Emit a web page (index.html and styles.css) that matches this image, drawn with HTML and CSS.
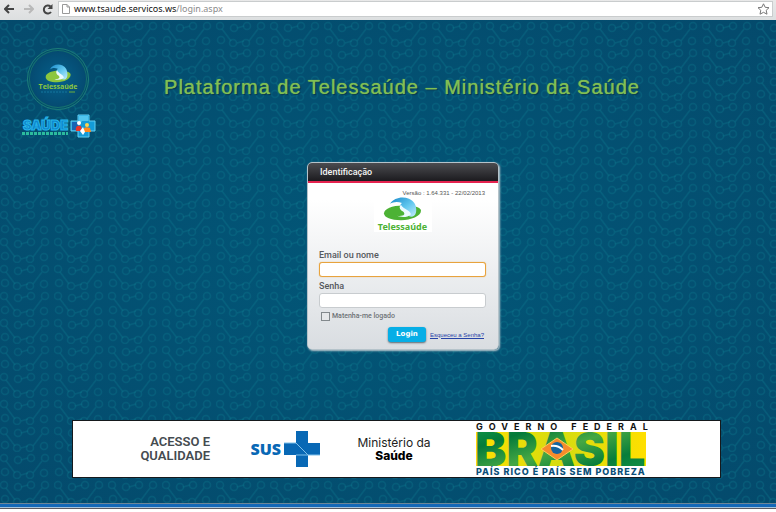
FILE: index.html
```html
<!DOCTYPE html>
<html lang="pt-BR">
<head>
<meta charset="utf-8">
<title>Plataforma de Telessaúde</title>
<link rel="stylesheet" href="styles.css">
</head>
<body>
<svg class="defs" width="0" height="0" aria-hidden="true">
  <defs>
    <linearGradient id="wave" x1="0" y1="0" x2="1" y2="1">
      <stop offset="0" stop-color="#1687c9"/><stop offset=".55" stop-color="#62c8ef"/><stop offset="1" stop-color="#c4ecfa"/>
    </linearGradient>
    <symbol id="leafwave" viewBox="0 0 40 28">
      <path d="M1 19C1 14 9 10 20 10C31 10 38 12 38 16C38 22 28 27 18 27C8 27 1 24 1 19Z" fill="currentColor"/>
      <path d="M7 8C11 1 19-1 26 2C32 5 34 11 33 18C32 23 28 24 25 22C28 20 25 16 21 15C16 13 16 10 19 7C14 5 10 6 7 8Z" fill="url(#wave)"/>
      <path d="M18 9C20 14 27 15 28 20C25 24 18 24 14 22C21 23 23 20 20 17C16 14 16 11 18 9Z" fill="#eafaff"/>
    </symbol>
  </defs>
</svg>
<header class="browser">
  <button class="nav" aria-label="Voltar"><svg width="11" height="10" viewBox="0 0 11 10"><path d="M10 5H2M5 1L1 5L5 9" fill="none" stroke="#444" stroke-width="2"/></svg></button>
  <button class="nav" aria-label="Avançar"><svg width="11" height="10" viewBox="0 0 11 10"><path d="M1 5H9M6 1L10 5L6 9" fill="none" stroke="#b9b9b9" stroke-width="2"/></svg></button>
  <button class="nav" aria-label="Recarregar"><svg width="11" height="11" viewBox="0 0 11 11"><path d="M9 8A4 4 0 1 1 8.500 2.500" fill="none" stroke="#444" stroke-width="2"/><path d="M10.500 0V5H5.500Z" fill="#444"/></svg></button>
  <div class="address">
    <svg width="8" height="10" viewBox="0 0 8 10"><path d="M.5.5H5L7.500 3V9.500H.5ZM5 .5V3H7.500" fill="#fff" stroke="#999"/></svg>
    <span class="url">www.tsaude.servicos.ws<span class="path">/login.aspx</span></span>
    <svg width="13" height="12" viewBox="0 0 13 12"><path d="M6.500.8L8.200 4.300L12 4.700L9.200 7.300L10 11.200L6.500 9.300L3 11.200L3.800 7.300L1 4.700L4.800 4.300Z" fill="#fff" stroke="#777"/></svg>
  </div>
</header>
<div class="page">
  <div class="masthead">
    <div class="logos">
      <div class="seal">
        <svg width="27" height="19" aria-hidden="true"><use href="#leafwave"/></svg>
        <span class="seal-name">Telessaúde</span>
        <svg width="34" height="2" aria-hidden="true"><path d="M0 1H26" stroke="#14779e" stroke-dasharray="2 1"/><path d="M28 1H34" stroke="#6fae3c"/></svg>
      </div>
      <svg class="saude" width="74" height="24" viewBox="0 0 74 24" role="img" aria-label="Saúde mais perto de você">
        <text x="1" y="16" class="saude-word">SAÚDE</text>
        <path d="M0 19.500H46" stroke="#2cbb9d" stroke-width="3" stroke-dasharray="3 1"/>
        <path d="M56 1H67V7H73V17H67V23H56V17H49V7H56Z" fill="#139bd8" stroke="#62cdf0"/>
        <path d="M57 2H66V7H60L57 11Z" fill="#53c5ee"/>
        <path d="M50 8H56V16H50Z" fill="#1764b4"/>
        <circle cx="57" cy="9" r="2" fill="#fff"/><path d="M54 17C53 13 55 11 59 12L60 17Z" fill="#e6352c"/>
        <circle cx="65" cy="11" r="2" fill="#ffd34d"/><path d="M61 18C61 14 63 12 68 14L69 18Z" fill="#ff8a1e"/>
        <path d="M58 17L61 13L63 18L61 21Z" fill="#fff"/>
      </svg>
    </div>
    <h1 class="title">Plataforma de Telessaúde – Ministério da Saúde</h1>
  </div>

  <form class="card">
    <h2 class="card-title">Identificação</h2>
    <div class="card-body">
      <p class="version">Versão : 1.64.331 - 22/02/2013</p>
      <div class="brand">
        <svg width="40" height="24" viewBox="0 0 40 28" preserveAspectRatio="none" aria-hidden="true"><use href="#leafwave"/></svg>
        <span>Telessaúde</span>
      </div>
      <label class="label" for="user">Email ou nome</label>
      <input class="field focused" id="user" type="text">
      <label class="label" for="pass">Senha</label>
      <input class="field" id="pass" type="password">
      <div class="remember"><input type="checkbox" id="keep"><label for="keep">Matenha-me logado</label></div>
      <div class="actions"><button class="login" type="button">Login</button><a href="#">Esqueceu a Senha?</a></div>
    </div>
  </form>

  <footer class="sponsors">
    <div class="access">ACESSO E<br>QUALIDADE</div>
    <div class="sus">
      <span>SUS</span>
      <svg width="36" height="36" viewBox="0 0 36 36" aria-hidden="true"><path d="M12 0H24V12H36V24H24V36H12V24H0V12H12Z" fill="#0868b5"/><path d="M0 12H12L24 24H36M12 24H24" fill="none" stroke="#7fc0ea"/></svg>
    </div>
    <div class="ministry">Ministério da<br><b>Saúde</b></div>
    <div class="federal">
      <span class="gov">GOVERNO FEDERAL</span>
      <svg class="flag" width="170" height="34" viewBox="0 0 170 34" role="img" aria-label="Brasil">
        <defs>
          <linearGradient id="yellow"><stop offset="0" stop-color="#ffdf00"/><stop offset=".5" stop-color="#d5dc10"/><stop offset="1" stop-color="#ffdf00"/></linearGradient>
          <linearGradient id="green" x1="0" y1="0" x2="1" y2="1"><stop offset="0" stop-color="#13a04b"/><stop offset=".25" stop-color="#047a3a"/><stop offset=".5" stop-color="#45a744"/><stop offset=".75" stop-color="#077d3b"/><stop offset="1" stop-color="#16994a"/></linearGradient>
        </defs>
        <rect width="170" height="34" fill="url(#yellow)"/>
        <text x="-1" y="34" class="brasil">BRASIL</text>
        <path d="M65 17L81 6L97 17L81 28Z" fill="#f68b2c" stroke="#ffd052"/>
        <circle cx="81" cy="16" r="6" fill="#14649f"/><path d="M75 14Q82 13 87 18" fill="none" stroke="#fff" stroke-width="2"/>
      </svg>
      <span class="motto">PAÍS RICO É PAÍS SEM POBREZA</span>
    </div>
  </footer>
</div>
<div class="taskbar"></div>
</body>
</html>
```
FILE: styles.css
```css
* { box-sizing: border-box; }
body {
  margin: 0;
  min-height: 100vh;
  display: flex;
  flex-direction: column;
  background: #fff;
  font-family: "Noto Sans", sans-serif;
}
.defs { position: absolute; }
h1, h2, p { margin: 0; font-weight: 400; }
svg { display: block; flex: none; }

.browser {
  display: flex;
  align-items: center;
  gap: 8px;
  height: 20px;
  padding: 0 3px 2px 4px;
  background: linear-gradient(#e9e9e9, #dcdfe0);
}
.nav { padding: 0; border: 0; background: none; }
.nav + .address { margin-left: -3px; }
.address {
  flex: 1;
  display: flex;
  align-items: center;
  gap: 4px;
  height: 16px;
  padding: 0 2px 0 3px;
  background: #fff;
  border: 1px solid #c9cccd;
}
.url { flex: 1; font: 9px/14px "Noto Sans", sans-serif; color: #111; }
.path { color: #8b8b8b; }

.page {
  flex: 1;
  background:
    url("data:image/svg+xml,%3Csvg xmlns='http://www.w3.org/2000/svg' width='54' height='27'%3E%3Cg fill='none' stroke='%230d7d92' stroke-opacity='.3' stroke-width='1.5'%3E%3Cpath d='M6 9L15 21M33 21L42 9M21 8L28 6M21 23L28 21'/%3E%3Ccircle cx='4' cy='6' r='3.5'/%3E%3Ccircle cx='17' cy='23' r='3.5'/%3E%3Ccircle cx='30' cy='23' r='3.5'/%3E%3Ccircle cx='45' cy='6' r='3.5'/%3E%3Ccircle cx='31' cy='6' r='3.5'/%3E%3Ccircle cx='18' cy='8' r='3.5'/%3E%3Ccircle cx='44' cy='21' r='3.5'/%3E%3Ccircle cx='5' cy='20' r='3.5'/%3E%3C/g%3E%3C/svg%3E"),
    radial-gradient(ellipse at center, #025778, #044a6c);
}
.masthead {
  display: grid;
  grid-template-columns: 74px 1fr;
  align-items: center;
  padding: 28px 68px 0 22px;
}
.logos { display: flex; flex-direction: column; gap: 4px; }
.seal {
  display: flex;
  flex-direction: column;
  align-items: center;
  width: 62px;
  height: 62px;
  margin-left: 5px;
  padding-top: 15px;
  border: 1px solid #1c7c78;
  border-radius: 50%;
  background: radial-gradient(#06618c, #043f63);
  box-shadow: inset 0 0 0 1px #034c6c, inset 0 0 0 2px #15706f;
  color: #8cc63f;
}
.seal-name { font: 700 7px/8px "Open Sans", sans-serif; }
.saude-word { font: 900 13px "Inter", sans-serif; fill: #0d86cc; stroke: #27b4ea; }
.title {
  justify-self: center;
  padding-bottom: 12px;
  font: 20px/24px "Liberation Sans", sans-serif;
  letter-spacing: 1px;
  color: #80bf54;
  text-shadow: 0 0 1px #80bf54, 1px 1px 1px #042c48;
  white-space: nowrap;
}

.card {
  width: 192px;
  margin: 24px auto 0;
  position: relative;
  left: 15px;
  border: 1px solid #b5c3ca;
  border-radius: 5px;
  background: linear-gradient(#fff 20%, #d9dde1);
  box-shadow: 1px 1px 2px #bcc8ce;
  overflow: hidden;
}
.card-title {
  padding: 0 12px;
  border-bottom: 2px solid #e5234f;
  background: linear-gradient(#4b4c50, #1c1b1f);
  font: 500 9px/18px "Roboto", sans-serif;
  color: #f4f4f4;
}
.card-body { padding: 6px 12px 7px 11px; }
.version { padding-right: 1px; font: 6px/8px "Liberation Sans", sans-serif; text-align: right; color: #555; }
.brand {
  display: flex;
  flex-direction: column;
  align-items: center;
  width: 58px;
  margin: 0 auto 16px;
  background: #fff;
  color: #4cb235;
  font: 700 9px/11px "Noto Sans", sans-serif;
}
.label { display: block; font: 500 9px/14px "Roboto", sans-serif; color: #55595d; }
.field {
  display: block;
  width: 100%;
  height: 15px;
  margin-bottom: 2px;
  padding: 0 3px;
  border: 1px solid #c8cccf;
  border-radius: 3px;
  background: #fff;
  font-size: 9px;
}
.focused { border-color: #e8a33d; box-shadow: 0 0 1px #e8a33d; }
.remember { display: flex; align-items: center; gap: 2px; height: 12px; font: 500 7px/9px "Roboto", sans-serif; color: #6d7276; }
.remember input {
  appearance: none;
  width: 9px;
  height: 9px;
  margin: 0 0 0 2px;
  border: 1px solid #83898d;
  background: #e6e8ea;
}
.actions { display: flex; align-items: center; justify-content: flex-end; gap: 4px; padding: 5px 2px 0 0; }
.actions a { font: 6px/8px "Liberation Sans", sans-serif; color: #2643a8; }
.login {
  width: 38px;
  height: 15px;
  padding: 0;
  border: 0;
  border-radius: 3px;
  background: #06aee6;
  box-shadow: 0 1px 2px #58666e;
  font: 700 7px/15px "DejaVu Sans", sans-serif;
  color: #fff;
}

.sponsors {
  display: grid;
  grid-template-columns: 137px 110px 112px 1fr;
  align-items: center;
  height: 58px;
  margin: 70px 55px 25px 72px;
  border: 1px solid #15191c;
  background: #fff;
}
.access { text-align: right; font: 600 13px/14px "Roboto", sans-serif; color: #444b50; }
.sus { display: flex; align-items: center; justify-content: flex-end; gap: 3px; color: #0868b5; font: 800 16px/18px "Open Sans", sans-serif; }
.ministry { padding-left: 36px; text-align: center; white-space: nowrap; font: 12px/13px "Inter", sans-serif; color: #222; }
.ministry b { font-weight: 800; color: #000; }
.federal { padding-left: 44px; }
.federal span { display: block; white-space: nowrap; }
.gov { font: 700 9px/10px "Inter", sans-serif; letter-spacing: 6px; color: #111; }
.flag { overflow: visible; }
.brasil { font: 900 47px "Inter", sans-serif; fill: url(#green); }
.motto { font: 800 9px/11px "Inter", sans-serif; letter-spacing: 1px; color: #0b4f79; }

.taskbar {
  height: 6px;
  margin-bottom: 3px;
  background: linear-gradient(#6e8798 1px, #1468b8 1px, #1468b8 4px, #a9c5dc 4px, #a9c5dc 5px, #5c5960 5px);
}
```
